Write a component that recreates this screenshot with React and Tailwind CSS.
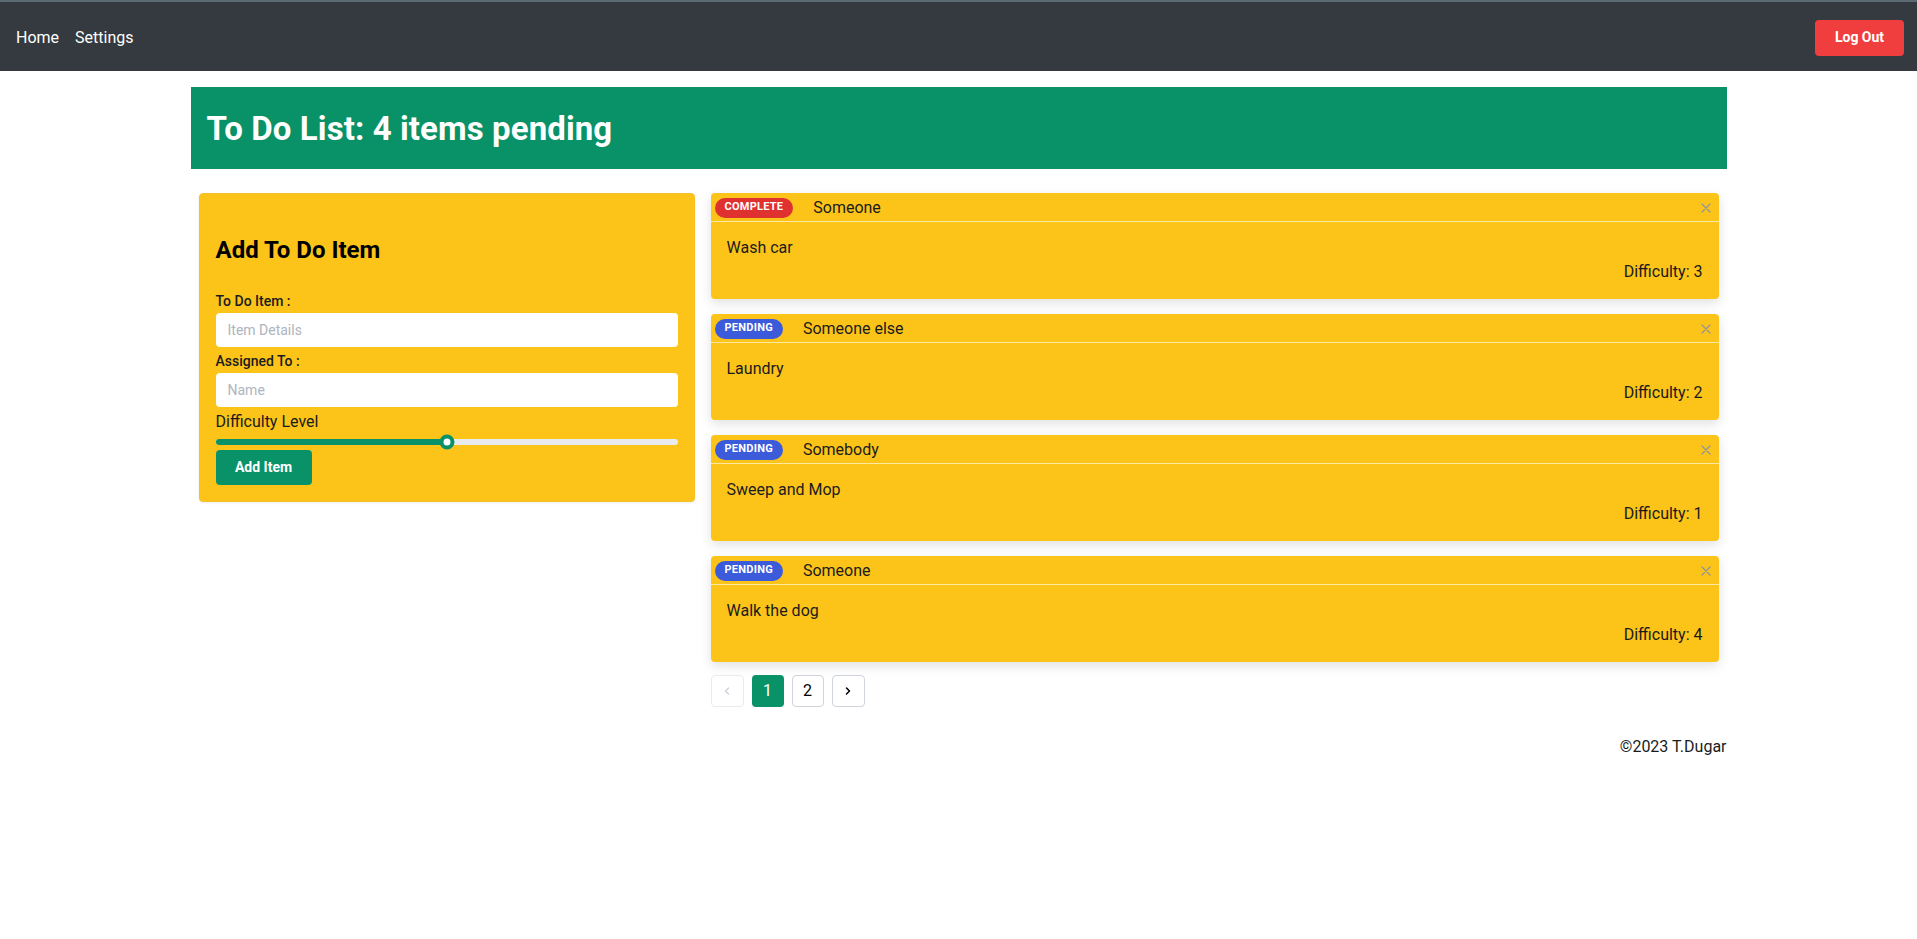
import React from "react";

const items = [
  { status: "COMPLETE", name: "Someone", text: "Wash car", diff: 3 },
  { status: "PENDING", name: "Someone else", text: "Laundry", diff: 2 },
  { status: "PENDING", name: "Somebody", text: "Sweep and Mop", diff: 1 },
  { status: "PENDING", name: "Someone", text: "Walk the dog", diff: 4 },
];

function CloseX() {
  return (
    <svg width="10" height="10" viewBox="0 0 10 10" className="text-[#8f959b]">
      <path d="M1 1L9 9M9 1L1 9" stroke="currentColor" strokeWidth="1.2" strokeLinecap="round" />
    </svg>
  );
}

function ItemCard({ item }) {
  const complete = item.status === "COMPLETE";
  return (
    <div className="h-[106px] bg-[#fcc419] rounded-[4px] shadow-[0_4px_12px_rgba(0,0,0,0.12)] flex flex-col">
      <div className="h-[29px] flex items-center pl-1 pr-2 pt-[1px] border-b border-[#fde9a0]">
        <span
          className={
            complete
              ? "h-5 px-[10px] rounded-full bg-[#e03131] text-white text-[11px] font-bold tracking-[0.25px] flex items-center"
              : "h-5 px-[10px] rounded-full bg-[#3b5bdb] text-white text-[11px] font-bold tracking-[0.25px] flex items-center"
          }
        >
          {item.status}
        </span>
        <span className="ml-5 text-[16px] text-[#1a1b1e]">{item.name}</span>
        <span className="ml-auto flex items-center">
          <CloseX />
        </span>
      </div>
      <div className="flex-1 px-4 pt-[14px] text-[16px] leading-6 text-[#1a1b1e]">
        <div>{item.text}</div>
        <div className="text-right">Difficulty: {item.diff}</div>
      </div>
    </div>
  );
}

function Chevron({ dir, color }) {
  return (
    <svg width="10" height="10" viewBox="0 0 10 10" className={color}>
      <path
        d={dir === "left" ? "M6.5 2L3.5 5L6.5 8" : "M3.5 2L6.5 5L3.5 8"}
        fill="none"
        stroke="currentColor"
        strokeWidth="1.5"
        strokeLinecap="round"
        strokeLinejoin="round"
      />
    </svg>
  );
}

export default function App() {
  return (
    <div className="min-h-[939px] bg-white text-black" style={{ fontFamily: "Roboto, 'Noto Sans', sans-serif" }}>
      <nav className="h-[71px] bg-[#343a40] border-t-2 border-[#5b6a70] flex items-center pl-4 pr-[13px] pt-[2px]">
        <a className="text-white text-[16px]">Home</a>
        <a className="text-white text-[16px] ml-4">Settings</a>
        <button className="ml-auto w-[89px] h-9 rounded-[4px] bg-[#f03e3e] text-white text-[14px] font-bold">
          Log Out
        </button>
      </nav>

      <div className="max-w-[1536px] mx-auto">
        <header className="mt-4 h-[82px] bg-[#099268] flex items-center px-4 pt-[2px]">
          <h1 className="text-white text-[33px] font-bold tracking-[0.1px]">To Do List: 4 items pending</h1>
        </header>

        <div className="mt-6 grid grid-cols-[512px_1fr]">
          <div className="px-2">
            <form className="bg-[#fcc419] rounded-[4px] border border-[#f5c02a] shadow-[0_1px_3px_rgba(0,0,0,0.08)] px-4 pt-[40px] pb-4">
              <h2 className="text-[24px] leading-8 font-bold text-black">Add To Do Item</h2>
              <label className="block mt-[25px] text-[14px] leading-5 font-medium text-[#1a1b1e]">To Do Item :</label>
              <input
                placeholder="Item Details"
                className="mt-[2px] w-full h-[34px] bg-white rounded-[4px] px-3 text-[14px] placeholder:text-[#adb5bd] outline-none"
              />
              <label className="block mt-1 text-[14px] leading-5 font-medium text-[#1a1b1e]">Assigned To :</label>
              <input
                placeholder="Name"
                className="mt-[2px] w-full h-[34px] bg-white rounded-[4px] px-3 text-[14px] placeholder:text-[#adb5bd] outline-none"
              />
              <div className="mt-[3px] text-[16px] leading-6 text-[#1a1b1e]">Difficulty Level</div>
              <div className="relative h-4 flex items-center">
                <div className="w-full h-[6px] rounded-full bg-[#e9ecef] flex">
                  <div className="w-1/2 h-full rounded-full bg-[#099268]" />
                </div>
                <div className="absolute left-1/2 top-1/2 -translate-x-1/2 -translate-y-1/2 w-[15px] h-[15px] rounded-full bg-white border-[4px] border-[#099268]" />
              </div>
              <button type="button" className="w-[96px] h-[35px] rounded-[4px] bg-[#099268] text-white text-[14px] font-bold">
                Add Item
              </button>
            </form>
          </div>

          <div className="px-2 flex flex-col">
            <div className="flex flex-col gap-[15px]">
              {items.map((it, i) => (
                <ItemCard key={i} item={it} />
              ))}
            </div>
            <div className="mt-[13px] flex gap-2">
              <div className="w-[33px] h-8 rounded-[4px] border border-[#e9ecef] flex items-center justify-center">
                <Chevron dir="left" color="text-[#ced4da]" />
              </div>
              <div className="w-8 h-8 rounded-[4px] bg-[#099268] text-white text-[16px] flex items-center justify-center">1</div>
              <div className="w-8 h-8 rounded-[4px] border border-[#ced4da] text-black text-[16px] flex items-center justify-center">2</div>
              <div className="w-[33px] h-8 rounded-[4px] border border-[#ced4da] flex items-center justify-center">
                <Chevron dir="right" color="text-black" />
              </div>
            </div>
          </div>
        </div>

        <footer className="mt-7 text-right text-[16px] leading-6 text-[#1a1b1e]">©2023 T.Dugar</footer>
      </div>
    </div>
  );
}
